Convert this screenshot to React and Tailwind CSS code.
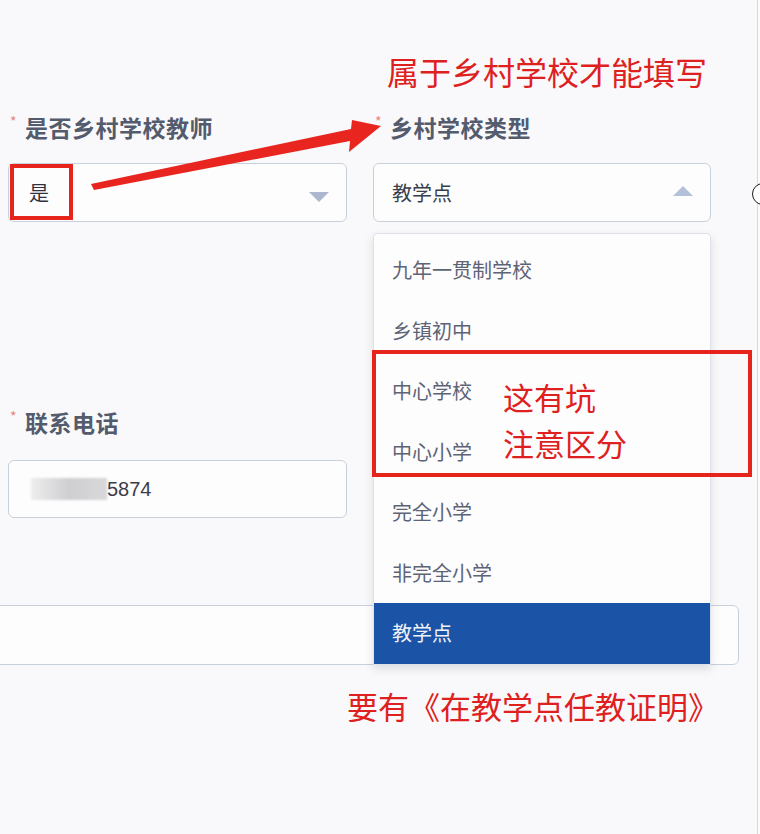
import React from 'react';

const FONT = { fontFamily: "'Noto Sans CJK SC', 'Noto Sans', sans-serif" };

const OPTIONS = ['九年一贯制学校', '乡镇初中', '中心学校', '中心小学', '完全小学', '非完全小学', '教学点'];

// Form label with the little red asterisk
const Label = ({ children }) => (
  <div className="flex items-start h-[32px]">
    <span className="w-[17px] pl-[2px] text-[14px] leading-[20px] text-[#e8837c]">*</span>
    <span className="text-[23px] leading-[32px] font-bold tracking-[0.5px] text-[#535b6c]">{children}</span>
  </div>
);

const Caret = ({ up = false }) => (
  <svg width="20" height="10" viewBox="0 0 20 10" className={up ? 'mt-[-4px]' : 'mt-[8px]'}>
    {up ? <polygon points="0,10 10,0 20,10" fill="#b3c0d9" /> : <polygon points="0,0 20,0 10,10" fill="#adb8d0" />}
  </svg>
);

export default function App() {
  return (
    <div className="relative w-[760px] h-[834px] overflow-hidden bg-[#f9f9fb] flex" style={FONT}>
      {/* form area */}
      <div className="w-[757px] pl-[8px] pt-[111px]">
        <div className="grid grid-cols-[339px_338px] gap-x-[26px]">
          {/* left column */}
          <div>
            <Label>是否乡村学校教师</Label>
            <div className="relative mt-[20px] h-[59px] rounded-[6px] border border-[#c9d0dd] bg-[#fdfdfe] flex items-center justify-between pl-[20px] pr-[17px]">
              <span className="text-[20px] text-[#2f3340]">是</span>
              <Caret />
              {/* annotation box */}
              <div className="absolute left-[1px] top-[0px] w-[63px] h-[56px] border-[4px] border-[#e6241c]" />
            </div>
          </div>

          {/* right column */}
          <div className="relative">
            <Label>乡村学校类型</Label>
            <div className="mt-[20px] h-[59px] rounded-[6px] border border-[#c9d0dd] bg-[#fdfdfe] flex items-center justify-between pl-[18px] pr-[17px]">
              <span className="text-[20px] text-[#3a3e4b]">教学点</span>
              <Caret up />
            </div>

            {/* open dropdown */}
            <div className="absolute z-20 left-0 top-[122px] w-[338px] h-[432px] rounded-t-[4px] border border-[#dde2ea] bg-[#fdfdfe] shadow-[0_4px_10px_rgba(60,70,90,0.15)] pt-[6px]">
              {OPTIONS.map((o, i) => {
                const active = i === OPTIONS.length - 1;
                return (
                  <div
                    key={o}
                    className={`h-[60.5px] flex items-center pl-[18px] text-[20px] ${active ? 'bg-[#1b53a7] text-[#eef2fa]' : 'text-[#5d6476]'}`}
                  >
                    {o}
                  </div>
                );
              })}
            </div>
          </div>
        </div>

        {/* phone */}
        <div className="w-[339px] mt-[184px]">
          <Label>联系电话</Label>
          <div className="mt-[22px] h-[58px] rounded-[6px] border border-[#c9d0dd] bg-[#fdfdfe] flex items-center pl-[22px]">
            <span className="w-[76px] h-[22px] bg-gradient-to-r from-[#eeeeee] via-[#cfcfd2] to-[#d8d8db] blur-[1px]" />
            <span className="text-[20px] text-[#3c3c48]" style={{ fontFamily: "'Liberation Sans', sans-serif" }}>5874</span>
          </div>
        </div>

        {/* wide input, partly under the dropdown */}
        <div className="ml-[-18px] mt-[87px] w-[749px] h-[60px] rounded-[6px] border border-[#c9d0dd] bg-[#fdfdfe]" />
      </div>
      <div className="w-[1px] bg-[#d7d9df]" />
      <div className="flex-1 bg-[#fbfbfc]" />

      {/* annotations */}
      <div className="absolute left-[387px] top-[49px] text-[32px] leading-[44px] text-[#df2020]">属于乡村学校才能填写</div>

      <svg className="absolute left-0 top-0 pointer-events-none" width="760" height="834">
        <polygon points="91,184 351,129 352,120 381,126 349,152 350,141 94,190" fill="#e8251f" />
      </svg>

      <div className="absolute z-30 left-[372px] top-[350px] w-[380px] h-[127px] border-[4px] border-[#e6241c] pl-[127px] pt-[20px]">
        <div className="text-[31px] leading-[46px] text-[#df2020]">这有坑</div>
        <div className="text-[31px] leading-[46px] text-[#df2020]">注意区分</div>
      </div>

      <div className="absolute left-[347px] top-[684px] text-[31px] leading-[44px] text-[#df2020]">要有《在教学点任教证明》</div>

      <div className="absolute left-[752px] top-[183px] w-[22px] h-[22px] rounded-full border-[1.5px] border-[#1a1a1a] bg-white" />
    </div>
  );
}
